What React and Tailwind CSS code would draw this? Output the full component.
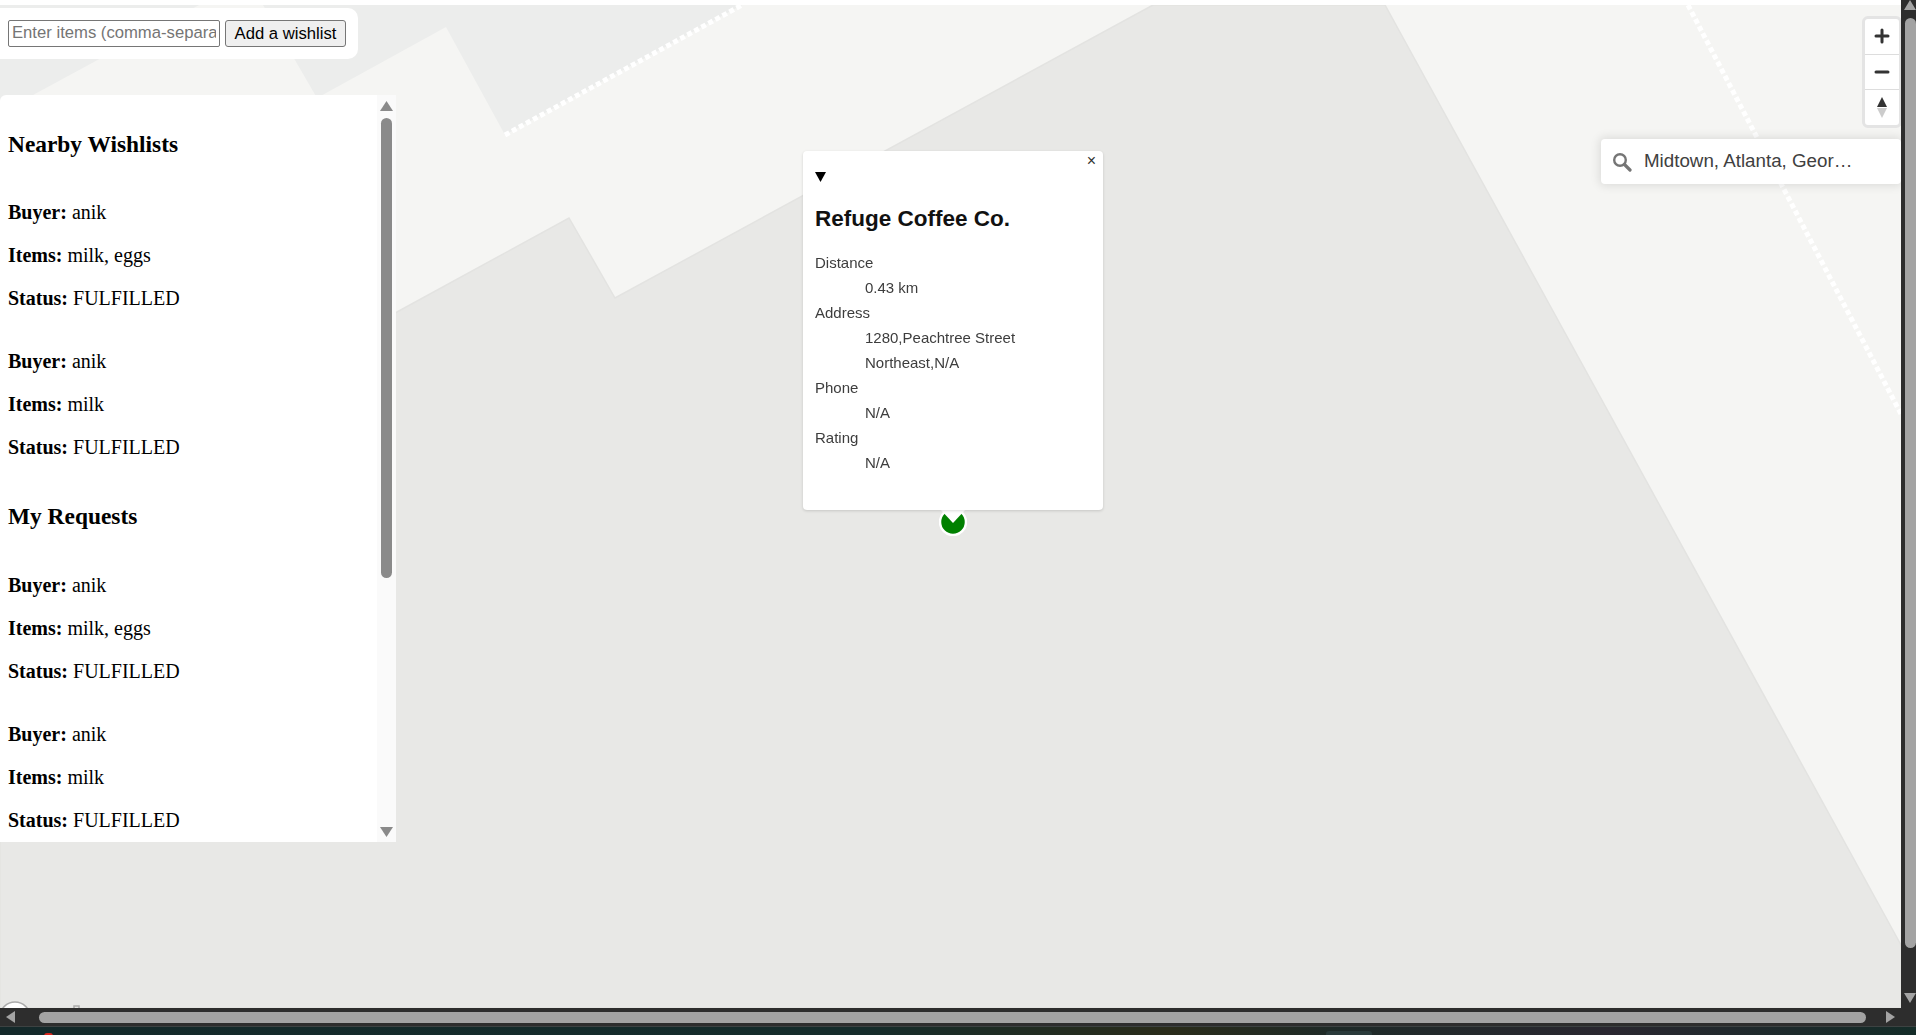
const SANS = "font-['Liberation_Sans',Arial,sans-serif]";
const SERIF = "font-['Liberation_Serif','Times_New_Roman',serif]";

const wishlists = [
  { buyer: "anik", items: "milk, eggs", status: "FULFILLED" },
  { buyer: "anik", items: "milk", status: "FULFILLED" },
];

const details = [
  { label: "Distance", lines: ["0.43 km"] },
  { label: "Address", lines: ["1280,Peachtree Street", "Northeast,N/A"] },
  { label: "Phone", lines: ["N/A"] },
  { label: "Rating", lines: ["N/A"] },
];

function MapBackground() {
  return (
    <svg className="absolute inset-0 h-full w-full" viewBox="0 0 1901 1003" preserveAspectRatio="none">
      <rect width="1901" height="1003" fill="#f5f5f3" />
      <polygon points="0,0 199,0 33,90 0,108" fill="#ecedec" />
      <polygon points="263,0 742,0 505,130 446,22 317,93" fill="#ecedec" />
      <polygon
        points="1153,0 1385,0 1901,940 1901,1003 0,1003 0,500 397,307 569,213 615,293"
        fill="#e8e8e6"
        stroke="#e3e3e1"
        strokeWidth="1.5"
      />
      <line x1="505" y1="130" x2="742" y2="0" stroke="#ffffff" strokeWidth="5" strokeDasharray="5 3" />
      <line x1="1688" y1="0" x2="1901" y2="409" stroke="#ffffff" strokeWidth="5" strokeDasharray="5 3" />
    </svg>
  );
}

function WishlistEntry({ buyer, items, status }) {
  return (
    <div className="pb-px">
      <p className="my-5"><b>Buyer:</b> {buyer}</p>
      <p className="my-5"><b>Items:</b> {items}</p>
      <p className="mb-[19px] mt-5"><b>Status:</b> {status}</p>
    </div>
  );
}

function WishlistPanel() {
  return (
    <div className={`absolute left-0 top-[90px] flex h-[747px] w-[396px] overflow-hidden rounded-tl-md bg-white text-black text-[20px] leading-[23px] ${SERIF}`}>
      <div className="w-[377px] shrink-0 pl-2 pt-[36px]">
        <h3 className="mb-[43px] text-[23.4px] font-bold leading-[27px]">Nearby Wishlists</h3>
        {wishlists.map((w, i) => <WishlistEntry key={i} {...w} />)}
        <h3 className="mb-[43.5px] mt-[24px] text-[23.4px] font-bold leading-[27px]">My Requests</h3>
        {wishlists.map((w, i) => <WishlistEntry key={i} {...w} />)}
      </div>
      <div className="relative flex w-[19px] flex-col items-center bg-[#fafafa]">
        <svg className="mt-[6px]" width="13" height="10"><polygon points="6.5,0 13,10 0,10" fill="#8a8a8a" /></svg>
        <div className="mt-[7px] h-[460px] w-[11px] rounded-full bg-[#8a8a8a]" />
        <svg className="absolute bottom-[5px]" width="13" height="10"><polygon points="0,0 13,0 6.5,10" fill="#8a8a8a" /></svg>
      </div>
    </div>
  );
}

function MapPopup() {
  return (
    <div className={`absolute left-[803px] top-[146px] flex h-[359px] w-[300px] flex-col rounded-[4px] bg-white pl-[12px] pt-[20px] text-[15px] leading-[25px] text-[#3d3d3d] shadow-[0_1px_3px_rgba(0,0,0,0.15)] ${SANS}`}>
      <span className="absolute right-[7px] top-[-3px] text-[16px] text-[#333]">×</span>
      <svg className="mt-[1px]" width="11" height="10"><polygon points="0,0 11,0 5.5,10" fill="#000" /></svg>
      <h3 className="mt-[22px] mb-[16px] text-[22.5px] font-bold leading-[30px] text-[#111]">Refuge Coffee Co.</h3>
      <dl className="blur-[0.3px]">
        {details.map((d) => (
          <div key={d.label}>
            <dt>{d.label}</dt>
            <dd className="ml-[50px] w-[170px]">
              {d.lines.map((l) => <div key={l}>{l}</div>)}
            </dd>
          </div>
        ))}
      </dl>
    </div>
  );
}

function Marker() {
  return (
    <svg className="absolute left-[939px] top-[503px]" width="28" height="28" viewBox="0 0 28 28">
      <circle cx="14" cy="14" r="13" fill="#008000" stroke="#fff" strokeWidth="2.5" />
      <polygon points="1,1 27,1 14,15" fill="#fff" />
    </svg>
  );
}

function ZoomControls() {
  return (
    <div className="absolute right-[-1px] top-[11px] flex h-[112px] w-[40px] flex-col rounded-[6px] border-[3px] border-[#e4e4e4] bg-white">
      <div className="flex flex-1 items-center justify-center border-b border-[#ddd]">
        <svg width="16" height="16" viewBox="0 0 16 16"><path d="M8 2v12M2 8h12" stroke="#333" strokeWidth="3" strokeLinecap="round" /></svg>
      </div>
      <div className="flex flex-1 items-center justify-center border-b border-[#ddd]">
        <svg width="16" height="16" viewBox="0 0 16 16"><path d="M2 8h12" stroke="#333" strokeWidth="3" strokeLinecap="round" /></svg>
      </div>
      <div className="flex flex-1 items-center justify-center">
        <svg width="12" height="24" viewBox="0 0 12 24">
          <polygon points="6,1 11,11 1,11" fill="#333" />
          <polygon points="6,22 11,12 1,12" fill="#ccc" />
        </svg>
      </div>
    </div>
  );
}

function SearchBox() {
  return (
    <div className={`absolute right-0 top-[134px] flex h-[45px] w-[300px] items-center rounded-[4px] bg-white pl-[11px] text-[18.75px] text-[#404040] shadow-[0_0_10px_2px_rgba(0,0,0,0.1)] ${SANS}`}>
      <svg width="20" height="20" viewBox="0 0 20 20" fill="none" stroke="#757575">
        <circle cx="8" cy="8" r="5.8" strokeWidth="2.4" />
        <path d="M12.5 12.5L18 18" strokeWidth="3.2" strokeLinecap="round" />
      </svg>
      <span className="ml-[12px]">Midtown, Atlanta, Geor…</span>
    </div>
  );
}

function WishlistForm() {
  return (
    <div className={`absolute left-0 top-[3px] flex h-[51px] w-[358px] items-center gap-[5px] rounded-r-[10px] bg-white pl-2 text-[16.67px] ${SANS}`}>
      <input
        readOnly
        placeholder="Enter items (comma-separated)"
        className="h-[27px] w-[212px] rounded-[2px] border border-[#767676] bg-white px-[3px] pb-[2px] text-black placeholder:text-[#757575]"
      />
      <button className="h-[27px] w-[121px] rounded-[3px] border border-[#767676] bg-[#efefef] pb-[2px] text-black">Add a wishlist</button>
    </div>
  );
}

function MapLogo() {
  return (
    <svg className="absolute bottom-0 left-0" width="90" height="7">
      <circle cx="15" cy="16" r="15" fill="#fff" stroke="#aaa" strokeWidth="1.5" />
      <rect x="74" y="5" width="5" height="4" fill="none" stroke="#aaa" strokeWidth="1.5" />
    </svg>
  );
}

export default function App() {
  return (
    <div className="flex h-[1035px] w-[1916px] flex-col overflow-hidden bg-[#2d2d2d]">
      <div className="flex h-[1008px]">
        <div className="flex w-[1901px] flex-col">
          <div className="h-[5px] bg-white" />
          <div className="relative flex-1 overflow-hidden">
            <MapBackground />
            <MapLogo />
            <WishlistForm />
            <WishlistPanel />
            <Marker />
            <MapPopup />
            <ZoomControls />
            <SearchBox />
          </div>
        </div>
        <div className="relative flex w-[15px] flex-col items-end">
          <svg className="absolute right-0 top-0" width="12" height="10"><polygon points="6,0 12,10 0,10" fill="#a3a3a3" /></svg>
          <div className="mt-[18px] h-[930px] w-[11px] rounded-full bg-[#a3a3a3]" />
          <svg className="absolute bottom-[5px] right-0" width="12" height="10"><polygon points="0,0 12,0 6,10" fill="#a3a3a3" /></svg>
        </div>
      </div>
      <div className="flex h-[18px] items-center pl-[6px]">
        <svg width="9" height="12"><polygon points="9,0 9,12 0,6" fill="#a3a3a3" /></svg>
        <div className="ml-[24px] h-[11px] w-[1827px] rounded-full bg-[#a3a3a3]" />
        <svg className="ml-[20px]" width="9" height="12"><polygon points="0,0 0,12 9,6" fill="#a3a3a3" /></svg>
      </div>
      <div className="relative h-[9px] border-t border-[#3d4242] bg-[linear-gradient(90deg,#14292a_0%,#152c2b_45%,#2a2c1a_61%,#1e2a28_70%,#2a2730_84%,#142c28_100%)]">
        <div className="absolute left-[44px] top-[6px] h-[3px] w-[9px] rounded-t-full bg-[#d9261c]" />
        <div className="absolute left-[1326px] top-[4px] h-[5px] w-[46px] rounded-t-[3px] bg-[#2a3a3a]" />
      </div>
    </div>
  );
}
